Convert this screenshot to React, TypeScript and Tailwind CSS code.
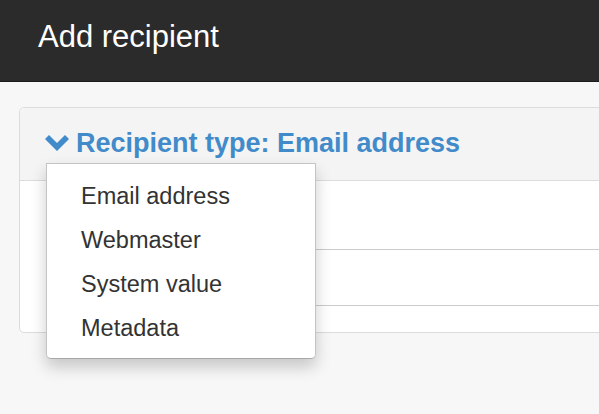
import React from "react";

export default function App() {
  const items = ["Email address", "Webmaster", "System value", "Metadata"];
  return (
    <div
      className="w-[599px] h-[414px] overflow-hidden bg-[#f7f7f7] relative"
      style={{ fontFamily: '"Liberation Sans", Arial, sans-serif' }}
    >
      <div className="h-[82px] bg-[#2b2b2b] border-b border-[#1c1c1c] flex items-center pl-[38px] pb-[9px]">
        <h1 className="text-[31px] leading-none text-white">Add recipient</h1>
      </div>
      <div className="pt-[25px] pl-[19px]">
        <div className="relative w-[700px] border border-[#dcdcdc] rounded-[5px] bg-white">
          <div className="h-[73px] bg-[#f4f4f4] border-b border-[#dcdcdc] rounded-t-[5px] flex items-center pl-[25px] pb-[2px]">
            <svg width="24" height="16" viewBox="0 0 24 16" className="mr-[7px]">
              <polygon points="0,4 4,0 12,8 20,0 24,4 12,16" fill="#428bca" />
            </svg>
            <span className="text-[27px] font-bold text-[#428bca] leading-none">
              Recipient type: Email address
            </span>
          </div>
          <div className="h-[151px] pl-[26px] pt-[68px]">
            <div className="h-[57px] border border-[#cccccc] rounded-[4px] bg-white" />
          </div>
          <div className="absolute left-[26px] top-[55px] w-[270px] bg-white border border-[#c4c4c4] border-b-[#a8a8a8] rounded-b-[5px] shadow-[0_8px_16px_rgba(0,0,0,0.2)] pt-[10px] pb-[8px]">
            {items.map((t) => (
              <div key={t} className="h-[44px] leading-[44px] pl-[34px] text-[23.5px] text-[#333333]">
                {t}
              </div>
            ))}
          </div>
        </div>
      </div>
    </div>
  );
}
